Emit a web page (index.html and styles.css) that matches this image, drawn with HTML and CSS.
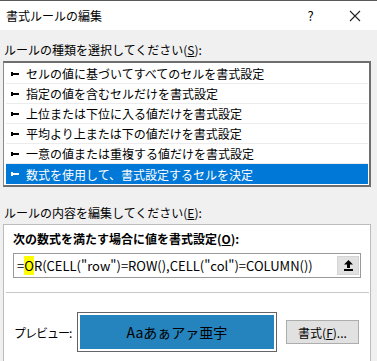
FILE: index.html
```html
<!DOCTYPE html>
<html lang="ja">
<head>
    <meta charset="UTF-8">
    <title>書式ルールの編集</title>
    <link rel="stylesheet" href="styles.css">
</head>
<body>
    <div class="dialog">
        <div class="titlebar">
            <span class="title">書式ルールの編集</span>
            <span class="help">?</span>
            <span class="close">
                <svg width="12" height="12" viewBox="0 0 12 12"><path d="M1 1L11 11M11 1L1 11" stroke="#222" stroke-width="1.1" fill="none"/></svg>
            </span>
        </div>

        <div class="content">
            <div class="caption">ルールの種類を選択してください(<u>S</u>):</div>
            <ul class="rules">
                <li><i class="bullet"></i>セルの値に基づいてすべてのセルを書式設定</li>
                <li><i class="bullet"></i>指定の値を含むセルだけを書式設定</li>
                <li><i class="bullet"></i>上位または下位に入る値だけを書式設定</li>
                <li><i class="bullet"></i>平均より上または下の値だけを書式設定</li>
                <li><i class="bullet"></i>一意の値または重複する値だけを書式設定</li>
                <li class="selected"><i class="bullet"></i>数式を使用して、書式設定するセルを決定</li>
            </ul>

            <div class="caption">ルールの内容を編集してください(<u>E</u>):</div>
            <div class="group">
                <div class="formula-label">次の数式を満たす場合に値を書式設定(<u>O</u>):</div>
                <div class="formula">
                    <span class="formula-text">=<mark>O</mark>R(CELL("row")=ROW(),CELL("col")=COLUMN())</span>
                    <span class="collapse">
                        <svg width="9" height="11" viewBox="0 0 9 11"><path d="M4.5 0L0 4.5H3V8H6V4.5H9Z" fill="#000"/><rect x="0" y="9" width="9" height="2" fill="#000"/></svg>
                    </span>
                </div>
                <div class="divider"></div>
                <div class="preview-row">
                    <span class="preview-label">プレビュー:</span>
                    <div class="preview">
                        <div class="preview-fill">Aaあぁアァ亜宇</div>
                    </div>
                    <button class="format-btn">書式(<u>F</u>)...</button>
                </div>
            </div>
        </div>
    </div>
</body>
</html>
```

FILE: styles.css
```css
body {
    margin: 0;
    background-color: #f0f0f0;
    font-family: "Noto Sans CJK JP", sans-serif;
    font-size: 12px;
    color: #000;
}

.dialog {
    height: 361px;
    overflow: hidden;
}

.titlebar {
    height: 29px;
    border-top: 1px solid #5a5a5a;
    background-color: #fff;
    display: flex;
    align-items: center;
    padding-left: 6px;
}

.title {
    flex: 1;
    font-size: 12px;
}

.help {
    width: 45px;
    text-align: center;
    font-size: 13px;
}

.close {
    width: 44px;
    display: flex;
    justify-content: center;
}

.content {
    padding: 12px 6px 0 3px;
}

.caption {
    line-height: 16px;
    padding-left: 1px;
    margin-bottom: 3px;
}

.rules {
    list-style: none;
    margin: 0 0 18px 0;
    padding: 1px 1px 1px 2px;
    background-color: #fff;
    border: 2px solid #6e6e6e;
    border-left: 1px solid #8a8a8a;
}

.rules li {
    height: 19px;
    line-height: 19px;
    border-bottom: 1px solid #ececec;
    display: flex;
    align-items: center;
    padding-left: 5px;
}

.rules li.selected {
    background-color: #0078d7;
    color: #fff;
    border-bottom: none;
    height: 20px;
}

.bullet {
    width: 8px;
    height: 4px;
    margin-right: 7px;
    position: relative;
    display: inline-block;
}

.bullet::before,
.bullet::after {
    content: "";
    position: absolute;
    left: 0;
    background-color: currentColor;
}

.bullet::before {
    top: 0;
    width: 2px;
    height: 4px;
}

.bullet::after {
    top: 1px;
    width: 8px;
    height: 2px;
}

.group {
    background-color: #fff;
    border: 1px solid #bcbcbc;
    height: 160px;
    padding: 6px 0 0 9px;
}

.formula-label {
    font-weight: bold;
    line-height: 16px;
    margin-bottom: 6px;
}

.formula {
    width: 346px;
    height: 23px;
    border: 1px solid #9a9a9a;
    display: flex;
    align-items: center;
    justify-content: space-between;
}

.formula-text {
    font-size: 13px;
    padding-left: 3px;
}

.formula-text mark {
    background-color: #ffff00;
    color: #000;
}

.collapse {
    width: 20px;
    height: 17px;
    margin-right: 1px;
    background-color: #e1e1e1;
    border: 1px solid #d4d4d4;
    display: flex;
    align-items: center;
    justify-content: center;
}

.divider {
    height: 1px;
    background-color: #c8c8c8;
    margin: 14px 1px 0 -7px;
}

.preview-row {
    display: flex;
    align-items: center;
    margin-top: 19px;
}

.preview-label {
    width: 63px;
    padding-left: 1px;
    white-space: nowrap;
    letter-spacing: -1px;
}

.preview {
    width: 194px;
    height: 34px;
    border: 1px solid #646464;
    padding: 2px;
    background-color: #fff;
}

.preview-fill {
    height: 100%;
    background-color: #2584bd;
    display: flex;
    align-items: center;
    justify-content: center;
    font-size: 14px;
}

.format-btn {
    margin-left: 9px;
    width: 73px;
    height: 24px;
    background-color: #e1e1e1;
    border: 1px solid #adadad;
    font-family: inherit;
    font-size: 12px;
    padding: 0;
}
```
